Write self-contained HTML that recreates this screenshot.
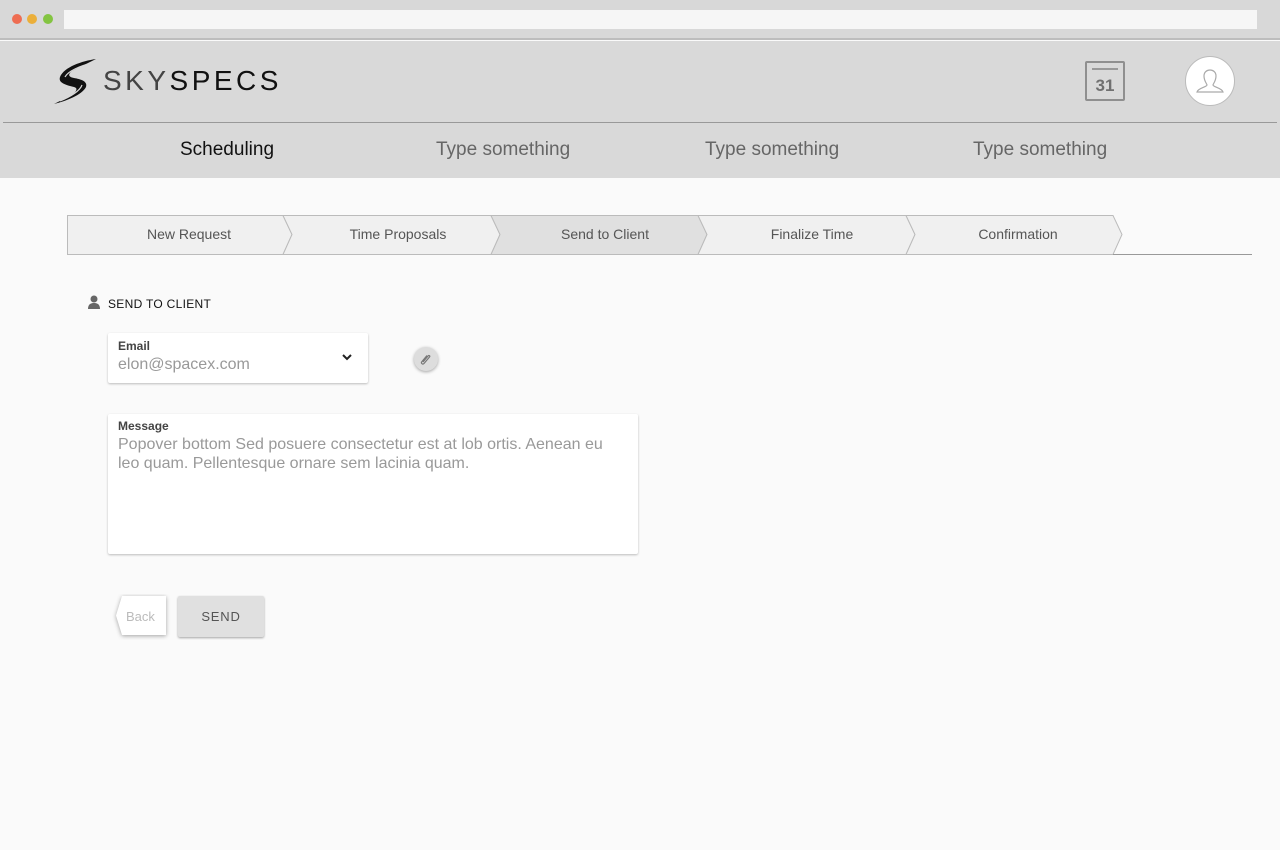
<!DOCTYPE html>
<html><head><meta charset="utf-8"><style>
*{margin:0;padding:0;box-sizing:border-box}
body{width:1280px;height:850px;background:#fafafa;font-family:"Liberation Sans",Arial,sans-serif;position:relative;overflow:hidden}
.chrome{position:absolute;left:0;top:0;width:1280px;height:40px;background:#d8d8d8;border-bottom:2px solid #bdbdbd}
.dot{position:absolute;top:14px;width:10px;height:10px;border-radius:50%}
.url{position:absolute;left:64px;top:10px;width:1193px;height:19px;background:#f6f6f6}
.hdr{position:absolute;left:0;top:41px;width:1280px;height:137px;background:#d9d9d9}
.hline{position:absolute;left:3px;top:122px;width:1274px;height:1px;background:#999}
.nav{position:absolute;top:139px;font-size:19px;color:#666}
.abs{position:absolute}
.card{position:absolute;background:#fff;border-radius:2px;box-shadow:0 1px 2px rgba(0,0,0,.25)}
.lbl{font-size:12px;font-weight:bold;color:#444;position:absolute;left:10px}
.val{font-size:16px;color:#999;position:absolute;left:10px}
</style></head><body>
<div class="chrome">
<div class="dot" style="left:12px;background:#ee6d52"></div>
<div class="dot" style="left:27px;background:#ebaf3a"></div>
<div class="dot" style="left:43px;background:#83c441"></div>
<div class="url"></div>
</div>
<div class="hdr"></div>
<div class="hline"></div>
<svg class="abs" style="left:52px;top:57px" width="46" height="48" viewBox="0 0 46 48">
<path d="M44 2 C30 4 12 10 8 20 C6 26 14 28 22 30 C26 31 25 34 20 38 L2 47 C14 44 30 38 34 30 C36 24 28 22 22 21 C16 20 16 17 20 14 Z" fill="#111"/>
<path d="M40 6 C28 9 16 14 13 20 M30 28 C28 34 18 40 8 44" stroke="#d9d9d9" stroke-width="1.2" fill="none"/>
</svg>
<div class="abs" style="left:103px;top:64px;font-size:28px;letter-spacing:3.5px;color:#111;line-height:34px"><span style="color:#444">SKY</span><span>SPECS</span></div>
<div class="abs" style="left:1085px;top:61px;width:40px;height:40px;border:2px solid #8f8f8f;border-radius:2px;background:#d9d9d9">
<div style="position:absolute;left:5px;top:5px;width:26px;height:2px;background:#999"></div>
<div style="position:absolute;left:0;top:13px;width:36px;text-align:center;font-size:17px;font-weight:bold;color:#707070">31</div></div>
<div class="abs" style="left:1185px;top:56px;width:50px;height:50px;border-radius:50%;background:#fff;border:1px solid #bbb">
<svg width="50" height="50" viewBox="0 0 50 50" style="position:absolute;left:-1px;top:-1px"><path d="M19 20 C19 12 31 12 31 20 C31 25 28 28 28 29 C28 31 37 32 38 36 L12 36 C13 32 22 31 22 29 C22 28 19 25 19 20 Z" fill="none" stroke="#aaa" stroke-width="1.2"/></svg></div>
<div class="nav" style="left:180px;color:#111">Scheduling</div>
<div class="nav" style="left:436px">Type something</div>
<div class="nav" style="left:705px">Type something</div>
<div class="nav" style="left:973px">Type something</div>
<svg class="abs" style="left:0;top:0" width="1280" height="260">
<g stroke="#bbb" stroke-width="1">
<path d="M67.5 215.5 L283 215.5 L292 234.5 L283 254.5 L67.5 254.5 Z" fill="#f0f0f0"/>
<path d="M283 215.5 L491 215.5 L500 234.5 L491 254.5 L283 254.5 L292 234.5 Z" fill="#f0f0f0"/>
<path d="M491 215.5 L698 215.5 L707 234.5 L698 254.5 L491 254.5 L500 234.5 Z" fill="#e0e0e0"/>
<path d="M698 215.5 L906 215.5 L915 234.5 L906 254.5 L698 254.5 L707 234.5 Z" fill="#f0f0f0"/>
<path d="M906 215.5 L1113 215.5 L1122 234.5 L1113 254.5 L906 254.5 L915 234.5 Z" fill="#f0f0f0"/>
</g>
<line x1="1113" y1="254.5" x2="1252" y2="254.5" stroke="#999"/>
<g font-size="14" fill="#555" text-anchor="middle" font-family="Liberation Sans,Arial,sans-serif">
<text x="189" y="239">New Request</text><text x="398" y="239">Time Proposals</text><text x="605" y="239">Send to Client</text><text x="812" y="239">Finalize Time</text><text x="1018" y="239">Confirmation</text></g>
</svg>
<svg class="abs" style="left:87px;top:295px" width="14" height="14" viewBox="0 0 14 14"><circle cx="7" cy="4" r="3.5" fill="#666"/><path d="M1 14 C1 9 4 8 7 8 C10 8 13 9 13 14 Z" fill="#666"/></svg>
<div class="abs" style="left:108px;top:297px;font-size:12px;color:#111;letter-spacing:.3px">SEND TO CLIENT</div>
<div class="card" style="left:108px;top:333px;width:260px;height:50px">
<div class="lbl" style="top:6px">Email</div><div class="val" style="top:23px">elon@spacex.com</div>
<svg style="position:absolute;left:234px;top:21px" width="10" height="7" viewBox="0 0 10 7"><path d="M1 1 L5 5 L9 1" stroke="#222" stroke-width="2" fill="none"/></svg></div>
<div class="abs" style="left:414px;top:347px;width:24px;height:24px;border-radius:50%;background:#ddd;box-shadow:0 1px 3px rgba(0,0,0,.35)">
<svg width="24" height="24" viewBox="0 0 24 24"><path d="M9 15 L14 9 C15 8 16.5 9 15.5 10 L10 16.5 C8.5 18 6.5 16 8 14.5 L13 8.5" stroke="#777" stroke-width="1.2" fill="none"/></svg></div>
<div class="card" style="left:108px;top:414px;width:530px;height:140px">
<div class="lbl" style="top:5px">Message</div>
<div class="val" style="top:21px;width:510px;line-height:19px">Popover bottom Sed posuere consectetur est at lob ortis. Aenean eu leo quam. Pellentesque ornare sem lacinia quam.</div></div>
<svg class="abs" style="left:112px;top:594px" width="60" height="46"><path d="M10 2 L54 2 L54 41 L10 41 L4 21.5 Z" fill="#fff" style="filter:drop-shadow(0 1px 2px rgba(0,0,0,.35))"/><text x="14" y="27" font-size="13" fill="#bbb" font-family="Liberation Sans,Arial,sans-serif">Back</text></svg>
<div class="abs" style="left:178px;top:596px;width:86px;height:41px;background:#e0e0e0;border-radius:2px;box-shadow:0 1px 2px rgba(0,0,0,.35);text-align:center;line-height:41px;font-size:13px;color:#555;letter-spacing:.8px">SEND</div>
</body></html>
